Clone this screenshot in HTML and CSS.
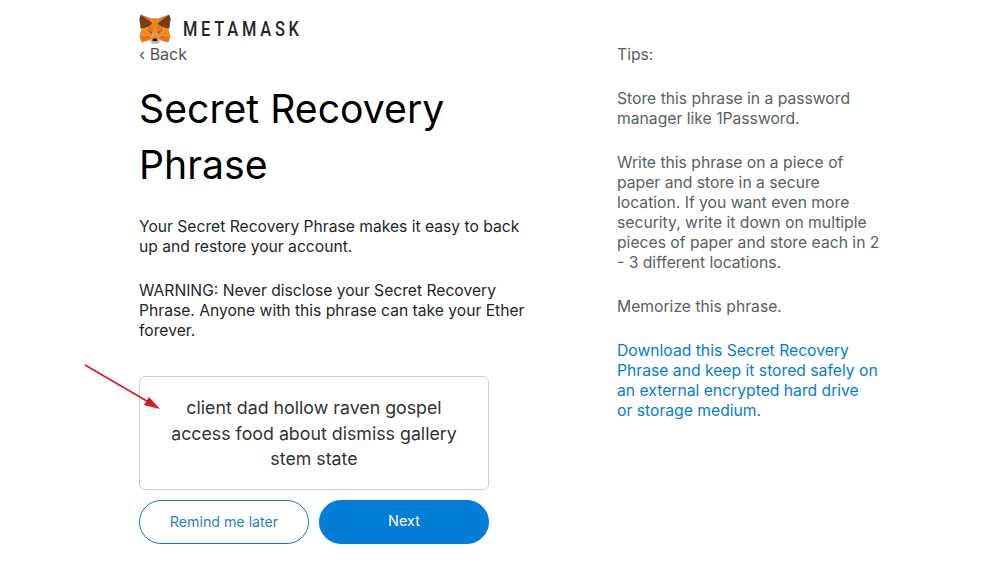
FILE: index.html
```html
<!DOCTYPE html>
<html lang="en">
<head>
<meta charset="utf-8">
<title>MetaMask</title>
<link rel="stylesheet" href="styles.css">
</head>
<body>
<div class="page">
  <main class="main">
    <header class="brand">
      <svg class="fox" viewBox="30 33 259 241" width="32" height="30" aria-hidden="true">
        <polygon fill="#E2761B" points="274.1,35.5 174.6,109.4 193,65.8"/>
        <polygon fill="#E4761B" points="44.4,35.5 143.1,110.1 125.6,65.8"/>
        <polygon fill="#E4761B" points="238.3,206.8 211.8,247.4 268.5,263 284.8,207.7"/>
        <polygon fill="#E4761B" points="33.9,207.7 50.1,263 106.8,247.4 80.3,206.8"/>
        <polygon fill="#E4761B" points="103.6,138.2 87.8,162.1 144.1,164.6 142.1,104.1"/>
        <polygon fill="#E4761B" points="214.9,138.2 175.9,103.4 174.6,164.6 230.8,162.1"/>
        <polygon fill="#E4761B" points="106.8,247.4 140.6,230.9 111.4,208.1"/>
        <polygon fill="#E4761B" points="177.9,230.9 211.8,247.4 207.1,208.1"/>
        <polygon fill="#D7C1B3" points="211.8,247.4 177.9,230.9 180.6,253 180.3,262.3"/>
        <polygon fill="#D7C1B3" points="106.8,247.4 138.3,262.3 138.1,253 140.6,230.9"/>
        <polygon fill="#233447" points="138.8,193.5 110.6,185.2 130.5,176.1"/>
        <polygon fill="#233447" points="179.7,193.5 188,176.1 208,185.2"/>
        <polygon fill="#CD6116" points="106.8,247.4 111.6,206.8 80.3,207.7"/>
        <polygon fill="#CD6116" points="207,206.8 211.8,247.4 238.3,207.7"/>
        <polygon fill="#CD6116" points="230.8,162.1 174.6,164.6 179.8,193.5 188.1,176.1 208.1,185.2"/>
        <polygon fill="#CD6116" points="110.6,185.2 130.6,176.1 138.8,193.5 144.1,164.6 87.8,162.1"/>
        <polygon fill="#E4751F" points="87.8,162.1 111.4,208.1 110.6,185.2"/>
        <polygon fill="#E4751F" points="208.1,185.2 207.1,208.1 230.8,162.1"/>
        <polygon fill="#E4751F" points="144.1,164.6 138.8,193.5 145.4,227.6 146.9,182.7"/>
        <polygon fill="#E4751F" points="174.6,164.6 171.9,182.6 173.1,227.6 179.8,193.5"/>
        <polygon fill="#F6851B" points="179.8,193.5 173.1,227.6 177.9,230.9 207.1,208.1 208.1,185.2"/>
        <polygon fill="#F6851B" points="110.6,185.2 111.4,208.1 140.6,230.9 145.4,227.6 138.8,193.5"/>
        <polygon fill="#C0AD9E" points="180.3,262.3 180.6,253 178.1,250.8 140.4,250.8 138.1,253 138.3,262.3 106.8,247.4 117.8,256.4 140.1,271.9 178.4,271.9 200.8,256.4 211.8,247.4"/>
        <polygon fill="#161616" points="177.9,230.9 173.1,227.6 145.4,227.6 140.6,230.9 138.1,253 140.4,250.8 178.1,250.8 180.6,253"/>
        <polygon fill="#763D16" points="278.3,114.2 286.8,73.4 274.1,35.5 177.9,106.9 214.9,138.2 267.2,153.5 278.8,140 273.8,136.4 281.8,129.1 275.6,124.3 283.6,118.2"/>
        <polygon fill="#763D16" points="31.8,73.4 40.3,114.2 35.2,118 43.2,124.1 37.1,129.1 45.1,136.4 40.1,140 51.6,153.5 103.9,138.2 140.9,106.9 44.4,35.5"/>
        <polygon fill="#F6851B" points="267.2,153.5 214.9,138.2 230.8,162.1 207.1,208.1 238.3,207.7 284.8,207.7"/>
        <polygon fill="#F6851B" points="103.6,138.2 51.3,153.5 33.9,207.7 80.3,207.7 111.4,208.1 87.8,162.1"/>
        <polygon fill="#F6851B" points="174.6,164.6 177.9,106.9 193.1,65.8 125.6,65.8 140.6,106.9 144.1,164.6 145.3,182.8 145.4,227.6 173.1,227.6 173.3,182.8"/>
      </svg>
      <span class="wordmark">METAMASK</span>
    </header>
    <a class="back">&lsaquo; Back</a>
    <h1 class="title">Secret Recovery Phrase</h1>
    <p class="copy first">Your Secret Recovery Phrase makes it easy to back up and restore your account.</p>
    <p class="copy second">WARNING: Never disclose your Secret Recovery Phrase. Anyone with this phrase can take your Ether forever.</p>
    <div class="phrase">client dad hollow raven gospel access food about dismiss gallery stem state
      <svg class="arrow" viewBox="0 0 80 50" width="80" height="50" aria-hidden="true">
        <path d="M1 1L68 40" stroke="#e2161c" stroke-width="1.600" fill="none"/>
        <path d="M76 45L60 41L65 33z" fill="#e2161c"/>
      </svg>
    </div>
    <div class="actions">
      <button class="btn outline">Remind me later</button>
      <button class="btn solid">Next</button>
    </div>
  </main>
  <aside class="tips">
    <p class="tip">Tips:</p>
    <p class="tip">Store this phrase in a password<br>manager like 1Password.</p>
    <p class="tip">Write this phrase on a piece of<br>paper and store in a secure<br>location. If you want even more<br>security, write it down on multiple<br>pieces of paper and store each in 2<br>- 3 different locations.</p>
    <p class="tip">Memorize this phrase.</p>
    <a class="tip link">Download this Secret Recovery<br>Phrase and keep it stored safely on<br>an external encrypted hard drive<br>or storage medium.</a>
  </aside>
</div>
</body>
</html>
```
FILE: styles.css
```css
* { box-sizing: border-box; }
html, body { margin: 0; padding: 0; background: #fff; overflow: hidden; }
body { font-family: Inter, "Open Sans", sans-serif; color: #24272a; }
.page { display: flex; width: 990px; height: 570px; padding: 14px 0 0 139px; }
.main { flex: none; width: 478px; }
.brand { display: flex; align-items: center; gap: 12px; height: 30px; }
.fox { flex: none; }
.wordmark { font-family: Roboto, sans-serif; font-size: 20px; font-weight: 500; letter-spacing: 4.6px; color: #24272a; white-space: nowrap; transform: scaleX(0.82); transform-origin: left center; }
.back { display: block; font-size: 16px; line-height: 20px; color: #4d5257; }
.title { margin: 17px 0 0; font-weight: 400; font-size: 39.200px; line-height: 56px; color: #000; width: 350px; }
.copy { margin: 0; font-size: 15.650px; line-height: 20px; width: 395px; color: #24272a; }
.first { margin-top: 24px; }
.second { margin-top: 24px; }
.phrase { position: relative; width: 350px; height: 114px; margin-top: 35px; padding: 18px 20px 0; border: 1px solid #cfcfcf; border-radius: 6px; font-size: 17.800px; line-height: 25.500px; text-align: center; color: #333; }
.arrow { position: absolute; left: -56px; top: -13px; }
.actions { display: flex; gap: 10px; width: 350px; margin-top: 10px; }
.btn { flex: 1; height: 44px; border-radius: 22px; font-family: inherit; font-size: 14.200px; font-weight: 400; padding: 0 0 2px; }
.outline { background: #fff; border: 1px solid #037dd6; color: #2a7fc4; }
.solid { background: #037dd6; border: 1px solid #037dd6; color: #fff; font-size: 14.400px; padding-bottom: 3px; }
.tips { flex: none; width: 290px; padding-top: 31px; font-size: 15.700px; line-height: 20px; color: #5a5f64; }
.tip { display: block; margin: 0 0 24px; }
.link { color: #037dd6; }
```
